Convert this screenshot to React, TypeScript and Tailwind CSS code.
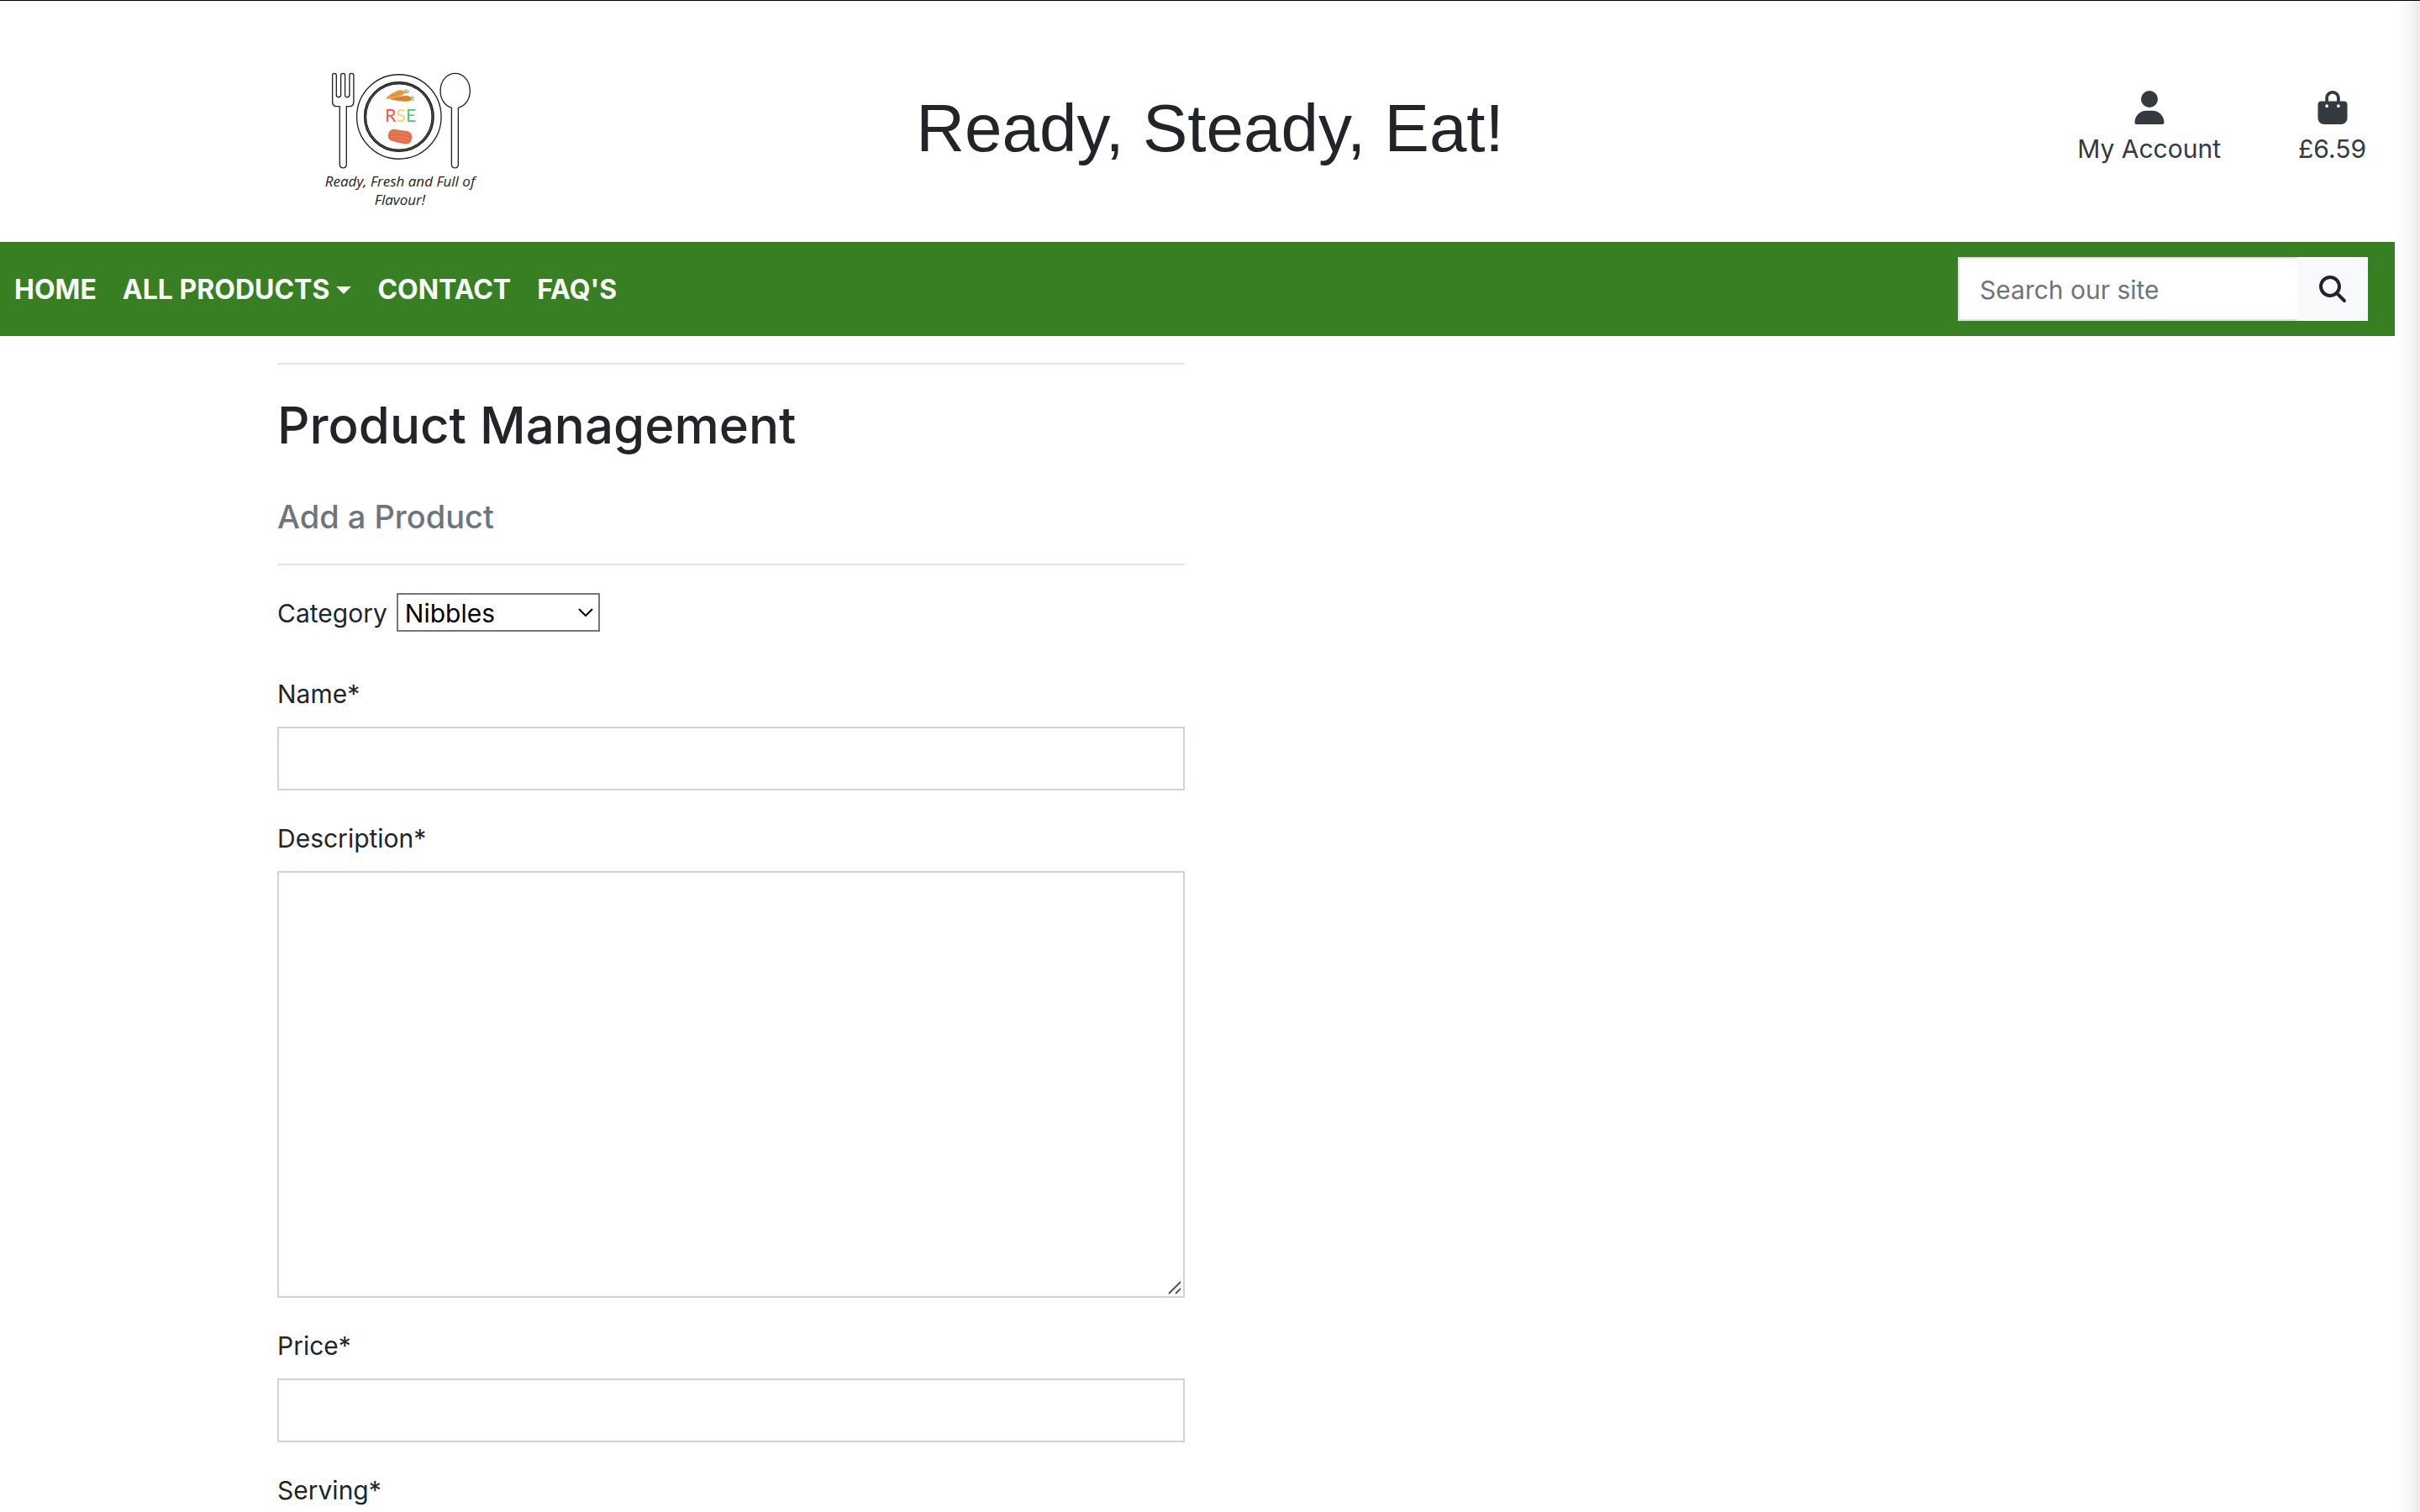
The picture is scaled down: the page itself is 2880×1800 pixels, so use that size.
import { FaBagShopping, FaMagnifyingGlass, FaUser } from "react-icons/fa6";

function Logo() {
  return (
    <a href="#" className="flex w-60 flex-col items-center text-[#222]" aria-label="Ready, Steady, Eat! home">
      <svg viewBox="90 70 520 360" className="h-[120px] w-[173px]" fill="none" stroke="#222" strokeWidth="4" strokeLinejoin="round">
        <path d="M133 201 H122 Q107 201 107 184 V90 Q107 83 114 83 Q121 83 121 90 V160 Q121 168 129 168 Q137 168 137 160 V90 Q137 83 144.500 83 Q152 83 152 90 V160 Q152 168 160 168 Q168 168 168 160 V90 Q168 83 175.500 83 Q183 83 183 90 V184 Q183 201 168 201 H157 V408 Q157 421 145 421 Q133 421 133 408 Z" />
        <circle cx="345" cy="238" r="151" />
        <circle cx="345" cy="238" r="121" strokeWidth="9" stroke="#555" />
        <circle cx="345" cy="238" r="124" />
        <circle cx="345" cy="238" r="118" strokeWidth="3" />
        <path d="M533 206 C508 198 493 174 493 146 C493 108 518 83 546 83 C574 83 599 108 599 146 C599 174 584 198 557 206 V408 Q557 421 545 421 Q533 421 533 408 Z" />
        <g stroke="none">
          <path d="M298 171 Q315 154 344 143 Q358 140 366 149 Q364 159 350 163 L305 174 Z" fill="#e8973a" />
          <path d="M310 174 Q340 163 372 162 Q390 164 389 176 Q384 184 372 183 Q336 182 310 174 Z" fill="#dd8629" />
          <path d="M322 158 L326 163 M338 149 L342 155 M335 171 L337 176 M354 167 L356 173" stroke="#b86a1c" strokeWidth="2" />
          <path d="M362 146 L374 140 M364 149 L382 145 M366 152 L380 152 M386 170 L396 164 M388 173 L400 170 M388 177 L399 179" stroke="#7f9a45" strokeWidth="3" />
          <path d="M307 301 Q309 284 325 282 L376 290 Q394 296 392 314 Q388 336 370 336 Q340 332 315 322 Q303 316 307 301 Z" fill="#e2704a" />
          <path d="M318 296 Q345 292 382 304 M313 310 Q345 304 384 317 M328 322 Q350 318 378 327" fill="none" stroke="#ec8c68" strokeWidth="2" />
          <text x="351" y="256" textAnchor="middle" fontFamily="Lato, sans-serif" fontSize="64">
            <tspan fill="#ee5252">R</tspan>
            <tspan fill="#f7d768">S</tspan>
            <tspan fill="#54c27c">E</tspan>
          </text>
        </g>
      </svg>
      <span className="pt-0.5 text-center font-['Open_Sans',sans-serif] text-[17px] leading-[22px] italic">
        Ready, Fresh and Full of
        <br />
        Flavour!
      </span>
    </a>
  );
}

function Header() {
  return (
    <header className="grid h-72 grid-cols-3 border-t border-black">
      <div className="flex justify-center pt-[82px] pr-2">
        <Logo />
      </div>
      <h1 className="self-center pt-4 text-center font-['Liberation_Sans',Arial,sans-serif] text-[80px] leading-[96px] whitespace-nowrap">
        Ready, Steady, Eat!
      </h1>
      <div className="flex items-start justify-end gap-[92px] pt-[107px] pr-16 text-[#343a40]">
        <a href="#" className="flex flex-col items-center gap-[5px]">
          <FaUser className="size-10" />
          <span>My Account</span>
        </a>
        <a href="#" className="flex flex-col items-center gap-[5px]">
          <FaBagShopping className="size-10" />
          <span>£6.59</span>
        </a>
      </div>
    </header>
  );
}

function Navbar() {
  return (
    <nav className="mr-[30px] flex h-28 items-center justify-between bg-[#377f22] pr-8 pl-[17px]">
      <div className="flex items-center gap-[31px] pt-0.5 text-[32px] font-bold text-[#f8f9fa]">
        <a href="#">HOME</a>
        <button type="button" className="flex items-center gap-2">
          ALL PRODUCTS
          <svg viewBox="0 0 18 9" className="h-[9px] w-[18px]" fill="currentColor">
            <path d="M0 0 H18 L9 9 Z" />
          </svg>
        </button>
        <a href="#">CONTACT</a>
        <a href="#">FAQ'S</a>
      </div>
      <form className="flex h-[76px]">
        <input
          type="text"
          aria-label="Search our site"
          placeholder="Search our site"
          className="w-[404px] border-2 border-r-0 border-[#dee2e6] bg-white px-6 pt-0.5 placeholder:text-[#6c757d]"
        />
        <button type="submit" aria-label="Search" className="flex w-[84px] items-center justify-center bg-[#f8f9fa]">
          <FaMagnifyingGlass className="size-8" />
        </button>
      </form>
    </nav>
  );
}

function Field({ id, label, multiline = false }: { id: string; label: string; multiline?: boolean }) {
  return (
    <div className="mb-8 flex flex-col gap-[15px]">
      <label htmlFor={id} className="pt-px">
        {label}*
      </label>
      {multiline ? (
        <div className="relative flex">
          <textarea id={id} rows={10} className="w-full resize-none border-2 border-[#ced4da] px-6 py-3" />
          <svg viewBox="0 0 16 16" className="pointer-events-none absolute right-1 bottom-1 size-4" stroke="#555" strokeWidth="2">
            <path d="M1 15 L15 1 M9 15 L15 9" />
          </svg>
        </div>
      ) : (
        <input id={id} type="text" className="h-[76px] border-2 border-[#ced4da] px-6" />
      )}
    </div>
  );
}

function ProductForm() {
  return (
    <main className="mx-auto w-full max-w-[2280px] px-[30px] pt-8">
      <div className="w-[1080px] max-w-full">
        <hr className="border-t-2 border-[#e5e5e5]" />
        <h2 className="pt-[34px] text-[60px] leading-[77px] font-medium">Product Management</h2>
        <h5 className="pt-[46px] text-[38px] leading-12 font-medium text-[#6c757d]">Add a Product</h5>
        <hr className="my-8 border-t-2 border-[#e5e5e5]" />
        <form>
          <div className="mb-12 flex items-center gap-[11px]">
            <label htmlFor="category" className="pt-0.5 leading-[46px]">
              Category
            </label>
            <div className="relative flex">
              <select
                id="category"
                className="h-[46px] w-[242px] appearance-none border-2 border-[#767676] bg-white pt-0.5 pl-2 leading-10 text-black"
              >
                <option>Nibbles</option>
              </select>
              <svg viewBox="0 0 18 10" className="pointer-events-none absolute top-[18px] right-2 h-[10px] w-[18px]" fill="none" stroke="#000" strokeWidth="2">
                <path d="M1 1 L9 9 L17 1" />
              </svg>
            </div>
          </div>
          <Field id="name" label="Name" />
          <Field id="description" label="Description" multiline />
          <Field id="price" label="Price" />
          <Field id="serving" label="Serving" />
        </form>
      </div>
    </main>
  );
}

export default function App() {
  return (
    <div className="relative h-screen overflow-hidden bg-white font-['Inter',sans-serif] text-[30px] leading-[48px] text-[#212529]">
      <Header />
      <Navbar />
      <ProductForm />
      <div className="pointer-events-none absolute top-px right-0 bottom-0 w-8 bg-linear-to-r from-transparent via-black/2 to-black/8" />
    </div>
  );
}
